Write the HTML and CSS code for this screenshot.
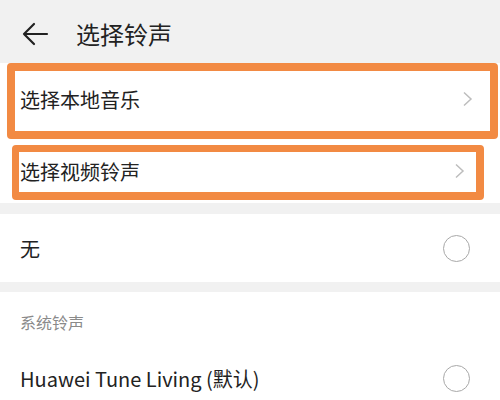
FILE: index.html
```html
<!DOCTYPE html>
<html lang="zh">
<head>
  <meta charset="UTF-8">
  <title>选择铃声</title>
  <link rel="stylesheet" href="styles.css">
</head>
<body>

  <div class="header">
    <svg class="back" width="28" height="24" viewBox="0 0 28 24">
      <path d="M26 12H3M13 2L3 12l10 10" fill="none" stroke="#222" stroke-width="2.2" stroke-linecap="round" stroke-linejoin="round"/>
    </svg>
    <h1>选择铃声</h1>
  </div>

  <div class="section links">
    <div class="link-row mark mark-one">
      <span>选择本地音乐</span>
      <svg class="chevron" width="12" height="16" viewBox="0 0 12 16"><path d="M2 1.5l7 6.5-7 6.5" fill="none" stroke="#bdbdbd" stroke-width="1.5"/></svg>
    </div>
    <div class="link-row mark mark-two">
      <span>选择视频铃声</span>
      <svg class="chevron" width="12" height="16" viewBox="0 0 12 16"><path d="M2 1.5l7 6.5-7 6.5" fill="none" stroke="#bdbdbd" stroke-width="1.5"/></svg>
    </div>
  </div>

  <div class="section">
    <div class="option">
      <span>无</span>
      <span class="radio"></span>
    </div>
  </div>

  <div class="section last">
    <div class="group-title">系统铃声</div>
    <div class="option">
      <span>Huawei Tune Living (默认)</span>
      <span class="radio"></span>
    </div>
  </div>

</body>
</html>
```

FILE: styles.css
```css
* {
  box-sizing: border-box;
}

body {
  margin: 0;
  padding: 0;
  width: 500px;
  height: 400px;
  overflow: hidden;
  font-family: "Noto Sans CJK SC", "Noto Sans", sans-serif;
  background-color: #f1f1f1;
  color: #222;
}

.header {
  height: 63px;
  display: flex;
  align-items: center;
  padding-left: 21px;
  padding-top: 4px;
}

.header h1 {
  margin: 0 0 0 27px;
  font-size: 24px;
  font-weight: 400;
  color: #222;
}

.section {
  background-color: #ffffff;
  margin-bottom: 10px;
}

.links {
  padding-bottom: 3px;
  margin-bottom: 11px;
}

.link-row {
  display: flex;
  align-items: center;
  justify-content: space-between;
  font-size: 20px;
  background-color: #ffffff;
}

.mark {
  border: 8px solid #f28a43;
  border-radius: 4px;
}

.mark-one {
  height: 76px;
  margin: 0 2px 0 7px;
  padding: 0 16px 4px 5px;
}

.mark-two {
  height: 55px;
  margin: 6px 16px 0 12px;
  border-width: 7px 8px 8px 7px;
  padding: 0 10px 2px 1px;
}

.option {
  height: 68px;
  display: flex;
  align-items: center;
  justify-content: space-between;
  padding: 0 30px 0 20px;
  font-size: 20px;
}

.radio {
  width: 27px;
  height: 27px;
  border: 1.5px solid #a8a8a8;
  border-radius: 50%;
}

.last {
  padding-top: 18px;
}

.group-title {
  padding-left: 20px;
  font-size: 16px;
  color: #8a8a8a;
  margin-bottom: 10px;
}
```
